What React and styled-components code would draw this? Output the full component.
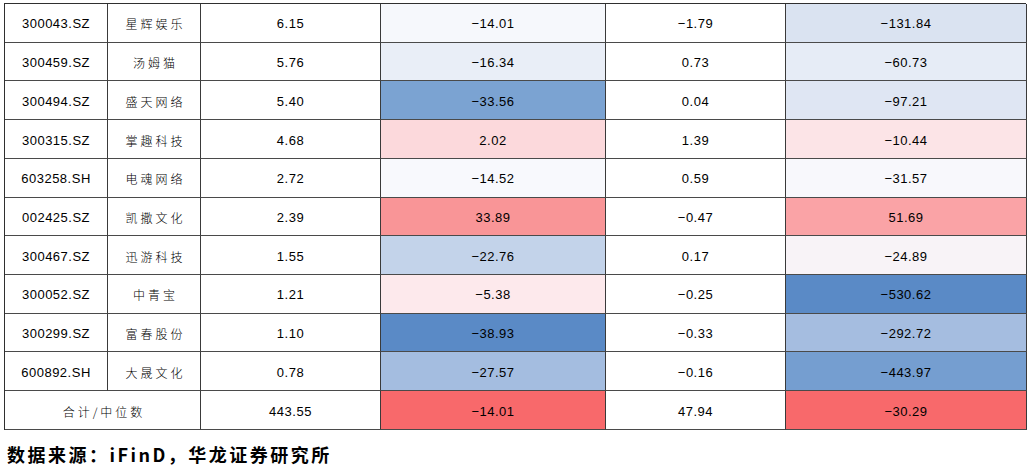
import React from "react";
import styled, { createGlobalStyle } from "styled-components";

const Global = createGlobalStyle`
  html, body { margin: 0; padding: 0; background: #ffffff; }
  body { font-family: "Liberation Sans", "Noto Sans CJK SC", sans-serif; color: #000; }
`;

const Page = styled.div`
  padding: 3px 0 0 4px;
  width: 1033px;
  height: 471px;
  box-sizing: border-box;
`;

const Grid = styled.div`
  display: grid;
  grid-template-columns: 103px 93px 180px 225px 180px 241px;
  grid-auto-rows: 38.73px;
  width: 1022px;
  border-top: 1px solid #2f2f2f;
  border-left: 1px solid #2f2f2f;
  box-sizing: border-box;
`;

const Cell = styled.div`
  display: flex;
  align-items: center;
  justify-content: center;
  border-right: 1px solid #3a3a3a;
  border-bottom: 1px solid #4a4a4a;
  background: ${(p) => p.$bg || "#ffffff"};
  grid-column: ${(p) => (p.$span ? `span ${p.$span}` : "auto")};
  font-family: "Liberation Sans", "Noto Sans CJK SC", sans-serif;
  font-size: 13px;
  letter-spacing: 0.5px;
  padding-top: 2px;
  box-sizing: border-box;
  white-space: nowrap;
`;

const NameCell = styled(Cell)`
  font-family: "Noto Sans CJK SC", sans-serif;
  font-size: 12px;
  font-weight: 300;
  letter-spacing: 3px;
  padding-left: 3px;
`;

const Source = styled.div`
  margin-top: 13px;
  margin-left: 3px;
  font-family: "Noto Sans CJK SC", sans-serif;
  font-weight: 700;
  font-size: 18px;
  letter-spacing: 2.5px;
  line-height: 22px;
`;

const m = (s) => s.replace("-", "\u2212");

const rows = [
  ["300043.SZ", "星辉娱乐", "6.15", ["-14.01", "#f6f8fc"], "-1.79", ["-131.84", "#dae3f1"]],
  ["300459.SZ", "汤姆猫", "5.76", ["-16.34", "#e9eef7"], "0.73", ["-60.73", "#e6ecf6"]],
  ["300494.SZ", "盛天网络", "5.40", ["-33.56", "#7ba3d2"], "0.04", ["-97.21", "#dfe6f3"]],
  ["300315.SZ", "掌趣科技", "4.68", ["2.02", "#fcd9dc"], "1.39", ["-10.44", "#fce4e7"]],
  ["603258.SH", "电魂网络", "2.72", ["-14.52", "#f8f9fd"], "0.59", ["-31.57", "#f8f8fc"]],
  ["002425.SZ", "凯撒文化", "2.39", ["33.89", "#f99597"], "-0.47", ["51.69", "#faa3a6"]],
  ["300467.SZ", "迅游科技", "1.55", ["-22.76", "#c3d3ea"], "0.17", ["-24.89", "#f8f3f7"]],
  ["300052.SZ", "中青宝", "1.21", ["-5.38", "#fde9ec"], "-0.25", ["-530.62", "#5a8ac6"]],
  ["300299.SZ", "富春股份", "1.10", ["-38.93", "#5a8ac6"], "-0.33", ["-292.72", "#a5bde0"]],
  ["600892.SH", "大晟文化", "0.78", ["-27.57", "#a4bde0"], "-0.16", ["-443.97", "#759ed0"]],
];

export default function App() {
  return (
    <Page>
      <Global />
      <Grid>
        {rows.map((r) => (
          <React.Fragment key={r[0]}>
            <Cell>{r[0]}</Cell>
            <NameCell>{r[1]}</NameCell>
            <Cell>{r[2]}</Cell>
            <Cell $bg={r[3][1]}>{m(r[3][0])}</Cell>
            <Cell>{m(r[4])}</Cell>
            <Cell $bg={r[5][1]}>{m(r[5][0])}</Cell>
          </React.Fragment>
        ))}
        <NameCell $span={2}>合计/中位数</NameCell>
        <Cell>443.55</Cell>
        <Cell $bg="#f8696b">{m("-14.01")}</Cell>
        <Cell>47.94</Cell>
        <Cell $bg="#f8696b">{m("-30.29")}</Cell>
      </Grid>
      <Source>数据来源：iFinD，华龙证券研究所</Source>
    </Page>
  );
}
